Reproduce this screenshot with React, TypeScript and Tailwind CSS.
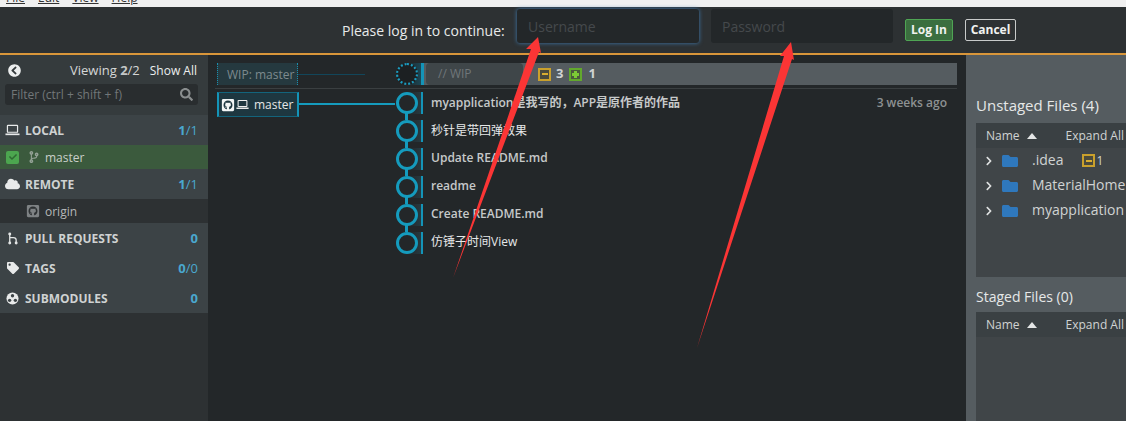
import React from "react";
import { FaCheck, FaChevronCircleLeft, FaChevronRight, FaCloud, FaCodeBranch, FaFolder, FaGithubSquare, FaSearch, FaTag } from "react-icons/fa";

const font = "[font-family:'Open_Sans','Noto_Sans_CJK_SC',sans-serif]";

const commits = [
  { text: "myapplication是我写的，APP是原作者的作品" },
  { text: "秒针是带回弹效果" },
  { text: "Update README.md" },
  { text: "readme" },
  { text: "Create README.md" },
  { text: "仿锤子时间View" },
];

const Laptop = ({ className }: { className?: string }) => (
  <svg viewBox="0 0 16 12" className={className} fill="none" stroke="currentColor" strokeWidth="1.3">
    <rect x="2.6" y="1" width="10.8" height="7.4" rx="0.6" />
    <path d="M0.5 10.6h15" strokeWidth="1.8" />
  </svg>
);

const PullIcon = () => (
  <svg viewBox="0 0 12 14" className="w-[11px] h-[13px] text-[#e4e6e6]" fill="currentColor" stroke="currentColor" strokeWidth="1.4">
    <circle cx="3" cy="2" r="0.9" />
    <circle cx="3" cy="12" r="0.9" />
    <circle cx="10" cy="12" r="0.9" />
    <path d="M3 3v8M3 6h4q3 0 3 2.5v2.5" fill="none" />
  </svg>
);

const ModulesIcon = () => (
  <svg viewBox="0 0 14 14" className="w-[13px] h-[13px]">
    <circle cx="7" cy="7" r="6.5" fill="#e8eaea" />
    <circle cx="7" cy="4" r="1.8" fill="#3c4346" />
    <circle cx="3.9" cy="9" r="1.8" fill="#3c4346" />
    <circle cx="10.1" cy="9" r="1.8" fill="#3c4346" />
  </svg>
);

const MinusBadge = ({ className }: { className?: string }) => (
  <span className={`w-[13px] h-[13px] border-2 border-[#c9a02c] bg-[#4b4a3c] flex items-center justify-center ${className ?? ""}`}>
    <span className="w-[6px] h-[2px] bg-[#d9ad30]" />
  </span>
);

const SideHeader = ({ icon, label, a, b }: { icon: React.ReactNode; label: string; a: string; b?: string }) => (
  <div className="flex items-center h-[30px] pl-[5px] pr-[10px] bg-[#3c4346]">
    <span className="w-[15px] flex justify-center text-[#e8eaea]">{icon}</span>
    <span className="ml-[5px] pt-[2px] text-[12px] font-bold text-[#cfd2d2]">{label}</span>
    <span className="ml-auto pt-[2px] text-[13px] text-[#4aa8cf]">
      <b>{a}</b>
      {b}
    </span>
  </div>
);

const Sidebar = () => (
  <aside className="w-[208px] shrink-0 bg-[#2d3133] flex flex-col">
    <div className="h-[60px] bg-[#353b3d] px-[5px] pt-[8px] shrink-0">
      <div className="flex items-center h-[15px] text-[12px] text-[#d5d7d7]">
        <FaChevronCircleLeft className="ml-[3px] w-[13px] h-[13px] text-[#eceeee]" />
        <span className="ml-auto text-[13px]">
          Viewing <b className="text-[#c4c7c7]">2</b>/2
        </span>
        <span className="ml-[10px] mr-[6px] text-[#eceeee]">Show All</span>
      </div>
      <div className="mt-[6px] h-[21px] w-[193px] rounded-[3px] bg-[#292d2f] flex items-center pl-[6px] pr-[5px] text-[12px] text-[#727779]">
        Filter (ctrl + shift + f)
        <FaSearch className="ml-auto w-[13px] h-[13px] text-[#8a8e8f]" />
      </div>
    </div>
    <SideHeader icon={<Laptop className="w-[15px] h-[12px]" />} label="LOCAL" a="1" b="/1" />
    <div className="flex items-center h-[24px] bg-[#3b5a3d] pl-[6px] text-[12px] text-[#c9cfca]">
      <span className="w-[13px] h-[13px] rounded-[2px] bg-[#4ca64f] flex items-center justify-center">
        <FaCheck className="w-[8px] h-[8px] text-[#2f6a33]" />
      </span>
      <FaCodeBranch className="ml-[10px] w-[10px] h-[12px] text-[#93a195]" />
      <span className="ml-[6px] pt-[2px]">master</span>
    </div>
    <SideHeader icon={<FaCloud className="w-[15px] h-[12px]" />} label="REMOTE" a="1" b="/1" />
    <div className="flex items-center h-[24px] pl-[26px] text-[12px] text-[#b5b8b8]">
      <FaGithubSquare className="w-[14px] h-[14px] text-[#7e8284]" />
      <span className="ml-[5px] pt-[2px]">origin</span>
    </div>
    <SideHeader icon={<PullIcon />} label="PULL REQUESTS" a="0" />
    <SideHeader icon={<FaTag className="w-[12px] h-[12px]" />} label="TAGS" a="0" b="/0" />
    <SideHeader icon={<ModulesIcon />} label="SUBMODULES" a="0" />
  </aside>
);

const Graph = () => (
  <main className="flex-1 bg-[#232729] pt-[8px] pr-[9px] min-w-0">
    <div className="flex items-center h-[22px]">
      <div className="ml-[9px] w-[81px] h-full border-x border-dotted border-[#1b8fae] bg-[#25393f] pl-[9px] pt-[1px] text-[12px] text-[#7d8a8e] flex items-center whitespace-nowrap">
        WIP: master
      </div>
      <div className="w-[67px] h-px bg-[#12465a]" />
      <div className="ml-[30px] w-[26px] h-full flex items-center bg-[linear-gradient(to_right,transparent_45%,#1b4756)]">
        <div className="w-[22px] h-[22px] ml-px rounded-full border-[2px] border-dotted border-[#1b9cc0] bg-[#1c2022]" />
      </div>
      <div className="w-[3px] h-full bg-[#1494b8]" />
      <div className="flex-1 h-full bg-[#555c60] flex items-center pl-[2px] text-[13px]">
        <div className="w-[97px] h-full rounded-[4px] bg-[#3f4649] pl-[12px] flex items-center text-[12px] text-[#70767a]">// WIP</div>
        <MinusBadge className="ml-[15px]" />
        <b className="ml-[5px] text-[#d0d3d4]">3</b>
        <span className="relative ml-[6px] w-[13px] h-[13px] border-2 border-[#62a82d] bg-[#4a5c3c] flex items-center justify-center">
          <span className="w-[7px] h-[3px] bg-[#7ccb35]" />
          <span className="absolute w-[3px] h-[7px] bg-[#7ccb35]" />
        </span>
        <b className="ml-[6px] text-[#d0d3d4]">1</b>
      </div>
    </div>
    <div className="ml-[7px] mt-[3px] h-px bg-[#3a3f41]" />
    {commits.map((c, i) => (
      <div key={i} className="relative flex items-center h-[28px] text-[12px] font-semibold text-[#c6c9c9]">
        <div className="w-[187px] shrink-0 flex items-center">
          {i === 0 && (
            <>
              <div className="ml-[9px] mt-[3px] w-[82px] h-[25px] border-y border-x-[2px] border-y-[#13647c] border-x-[#1494b8] bg-[#1e3740] flex items-center pl-[2px]">
                <FaGithubSquare className="w-[14px] h-[14px] text-[#f4f6f6]" />
                <Laptop className="ml-[1px] w-[13px] h-[11px] text-[#eef0f0]" />
                <span className="ml-[5px] text-[#e4e6e6] font-normal">master</span>
              </div>
              <div className="mt-[2px] w-[96px] h-[2px] bg-[#159bbd]" />
            </>
          )}
        </div>
        <div className="w-[26px] h-[22px] shrink-0 flex items-center bg-[linear-gradient(to_right,transparent_50%,#263a41)]">
          <div className="relative w-[22px] h-[22px] ml-px rounded-full border-[3px] border-[#159bbd] bg-[#232729]">
            {i < commits.length - 1 && <div className="absolute left-[6px] top-[18px] w-[3px] h-[7px] bg-[#159bbd]" />}
          </div>
        </div>
        <div className="w-[2px] h-[22px] bg-[#1494b8]" />
        <span className={`ml-[8px] ${i === 1 || i === 5 ? "text-[#e6e8e8] font-normal" : ""} ${i >= 2 ? "pb-[2px]" : ""}`}>{c.text}</span>
        {i === 0 && <span className="ml-auto mr-[10px] text-[#8d9192]">3 weeks ago</span>}
      </div>
    ))}
  </main>
);

const FileHeader = () => (
  <div className="h-[25px] bg-[#3a4043] flex items-center pl-[10px] text-[12px] text-[#d0d3d3]">
    Name
    <span className="ml-[7px] w-0 h-0 border-x-[5px] border-x-transparent border-b-[6px] border-b-[#e4e6e6]" />
    <span className="ml-[29px] whitespace-nowrap">Expand All</span>
  </div>
);

const FileRow = ({ name, badge }: { name: string; badge?: boolean }) => (
  <div className="h-[25px] flex items-center pl-[9px] text-[14px] text-[#d0d3d3] whitespace-nowrap">
    <FaChevronRight className="w-[8px] h-[10px] text-[#dfe1e1]" />
    <FaFolder className="ml-[9px] w-[16px] h-[16px] text-[#2f78bd]" />
    <span className="ml-[14px] pb-[2px]">{name}</span>
    {badge && (
      <>
        <MinusBadge className="ml-[19px]" />
        <span className="ml-[1px] text-[12px]">1</span>
      </>
    )}
  </div>
);

const FilesPanel = () => (
  <section className="w-[160px] shrink-0 bg-[#555c60] pl-[10px] flex flex-col overflow-hidden">
    <h2 className="mt-[40px] h-[28px] text-[15px] leading-[20px] text-[#e6e8e8] whitespace-nowrap">Unstaged Files (4)</h2>
    <div className="h-[154px] bg-[#404548] shrink-0">
      <FileHeader />
      <FileRow name=".idea" badge />
      <FileRow name="MaterialHome" />
      <FileRow name="myapplication" />
    </div>
    <h2 className="mt-[10px] h-[25px] text-[14px] leading-[20px] text-[#e6e8e8] whitespace-nowrap">Staged Files (0)</h2>
    <div className="flex-1 bg-[#404548]">
      <FileHeader />
    </div>
  </section>
);

export default function App() {
  return (
    <div className={`relative w-[1126px] h-[421px] overflow-hidden flex flex-col bg-[#232729] ${font}`}>
      <div className="h-[7px] shrink-0 bg-[#f0f0f0] overflow-hidden">
        <div className="-mt-[10px] pl-[6px] flex gap-[13px] text-[12px] leading-[16px] text-[#333]">
          <span className="underline">File</span>
          <span className="underline">Edit</span>
          <span className="underline">View</span>
          <span className="underline">Help</span>
        </div>
      </div>
      <header className="h-[46px] shrink-0 bg-[#2d3133] flex items-center pl-[342px]">
        <span className="w-[162px] text-[14px] text-[#e8eaea] whitespace-nowrap">Please log in to continue:</span>
        <input
          placeholder="Username"
          className="ml-[13px] -mt-[8px] w-[182px] h-[34px] rounded-[3px] bg-[#232729] pl-[11px] text-[14px] shadow-[0_0_4px_#3f7bb0] outline-none placeholder:text-[#45494c]"
        />
        <input
          placeholder="Password"
          className="ml-[12px] -mt-[8px] w-[182px] h-[34px] rounded-[3px] bg-[#232729] pl-[11px] text-[14px] outline-none placeholder:text-[#45494c]"
        />
        <button className="ml-[12px] w-[48px] h-[22px] rounded-[2px] border border-[#4fa554] bg-[#3b6e3f] text-[12px] font-bold text-[#f0f2f0]">Log In</button>
        <button className="ml-[12px] w-[51px] h-[22px] rounded-[2px] border border-[#c8caca] text-[12px] font-bold text-[#f0f2f0]">Cancel</button>
      </header>
      <div className="h-[2px] shrink-0 bg-[#d9963a]" />
      <div className="flex flex-1 min-h-0">
        <Sidebar />
        <Graph />
        <FilesPanel />
      </div>
      {/* red annotation arrows on top of the screenshot */}
      <svg className="absolute inset-0 pointer-events-none" width="1126" height="421" viewBox="0 0 1126 421">
        <polygon points="453,278 531,49 526,49 538,37 541,53 539,52" fill="#fb3535" />
        <polygon points="697,348 784,56 780,56 791,42 794,60 792,59" fill="#fb3535" />
      </svg>
    </div>
  );
}
